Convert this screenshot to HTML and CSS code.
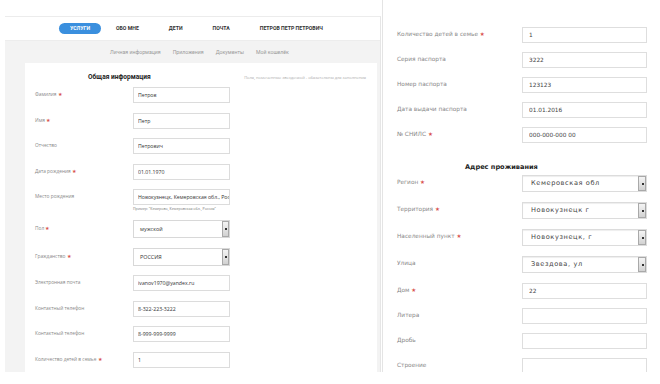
FILE: index.html
```html
<!DOCTYPE html>
<html lang="ru">
<head>
    <meta charset="UTF-8">
    <meta name="viewport" content="width=device-width, initial-scale=1.0">
    <title>Личная информация</title>
    <link rel="stylesheet" href="styles.css">
</head>
<body>

<div class="page">

    <!-- Левая часть: верхнее меню и общая информация -->
    <div class="shot-left">
        <div class="nav">
            <span class="nav-item active">УСЛУГИ</span>
            <span class="nav-item">ОБО МНЕ</span>
            <span class="nav-item">ДЕТИ</span>
            <span class="nav-item">ПОЧТА</span>
            <span class="nav-item">ПЕТРОВ ПЕТР ПЕТРОВИЧ</span>
        </div>

        <div class="subnav">
            <span>Личная информация</span>
            <span>Приложения</span>
            <span>Документы</span>
            <span>Мой кошелёк</span>
        </div>

        <div class="card">
            <div class="card-head">
                <h2>Общая информация</h2>
                <span class="note">Поля, помеченные звездочкой - обязательны для заполнения</span>
            </div>

            <div class="field">
                <label>Фамилия <span class="req">★</span></label>
                <input type="text" value="Петров" readonly>
            </div>
            <div class="field">
                <label>Имя <span class="req">★</span></label>
                <input type="text" value="Петр" readonly>
            </div>
            <div class="field">
                <label>Отчество</label>
                <input type="text" value="Петрович" readonly>
            </div>
            <div class="field">
                <label>Дата рождения <span class="req">★</span></label>
                <input type="text" value="01.01.1970" readonly>
            </div>
            <div class="field with-hint">
                <label>Место рождения</label>
                <input type="text" value="Новокузнецк, Кемеровская обл., Россия" readonly>
            </div>
            <div class="hint">Пример: "Кемерово, Кемеровская обл., Россия"</div>
            <div class="field">
                <label>Пол <span class="req">★</span></label>
                <div class="select">мужской<span class="arrow"></span></div>
            </div>
            <div class="field">
                <label>Гражданство <span class="req">★</span></label>
                <div class="select">РОССИЯ<span class="arrow"></span></div>
            </div>
            <div class="field">
                <label>Электронная почта</label>
                <input type="text" value="ivanov1970@yandex.ru" readonly>
            </div>
            <div class="field">
                <label>Контактный телефон</label>
                <input type="text" value="8-322-223-3222" readonly>
            </div>
            <div class="field">
                <label>Контактный телефон</label>
                <input type="text" value="8-999-999-9999" readonly>
            </div>
            <div class="field">
                <label>Количество детей в семье <span class="req">★</span></label>
                <input type="text" value="1" readonly>
            </div>
        </div>
    </div>

    <!-- Правая часть: паспорт и адрес -->
    <div class="shot-right">
        <div class="field">
            <label>Количество детей в семье <span class="req">★</span></label>
            <input type="text" value="1" readonly>
        </div>
        <div class="field">
            <label>Серия паспорта</label>
            <input type="text" value="3222" readonly>
        </div>
        <div class="field">
            <label>Номер паспорта</label>
            <input type="text" value="123123" readonly>
        </div>
        <div class="field">
            <label>Дата выдачи паспорта</label>
            <input type="text" value="01.01.2016" readonly>
        </div>
        <div class="field">
            <label>№ СНИЛС <span class="req">★</span></label>
            <input type="text" value="000-000-000 00" readonly>
        </div>

        <h3>Адрес проживания</h3>

        <div class="field sel">
            <label>Регион <span class="req">★</span></label>
            <div class="select">Кемеровская обл<span class="arrow"></span></div>
        </div>
        <div class="field sel">
            <label>Территория <span class="req">★</span></label>
            <div class="select">Новокузнецк г<span class="arrow"></span></div>
        </div>
        <div class="field sel">
            <label>Населенный пункт <span class="req">★</span></label>
            <div class="select">Новокузнецк, г<span class="arrow"></span></div>
        </div>
        <div class="field sel">
            <label>Улица</label>
            <div class="select">Звездова, ул<span class="arrow"></span></div>
        </div>
        <div class="field">
            <label>Дом <span class="req">★</span></label>
            <input type="text" value="22" readonly>
        </div>
        <div class="field">
            <label>Литера</label>
            <input type="text" value="" readonly>
        </div>
        <div class="field">
            <label>Дробь</label>
            <input type="text" value="" readonly>
        </div>
        <div class="field">
            <label>Строение</label>
            <input type="text" value="" readonly>
        </div>
    </div>

</div>

</body>
</html>
```

FILE: styles.css
```css
html, body {
    margin: 0;
    padding: 0;
    background: #fff;
}
body {
    width: 660px;
    height: 384px;
    overflow: hidden;
    font-family: "Open Sans", Arial, sans-serif;
    color: #333;
}
.page {
    display: flex;
    align-items: flex-start;
    padding-left: 5px;
}

/* ---- левая часть ---- */
.shot-left {
    width: 376px;
    height: 356px;
    margin-top: 16px;
    border-top: 1px solid #ececec;
    border-right: 1px solid #e6e6e6;
    background: #f3f3f3;
    overflow: hidden;
    box-sizing: border-box;
}
.nav {
    height: 23px;
    background: #fff;
    display: flex;
    align-items: center;
    padding-left: 54px;
    border-bottom: 1px solid #ededed;
}
.nav-item {
    font-family: Roboto, Arial, sans-serif;
    font-size: 5.2px;
    font-weight: bold;
    color: #333;
    padding: 0 15px;
    line-height: 11px;
}
.nav-item.active {
    background: #3a8fde;
    color: #fff;
    border-radius: 6px;
    padding: 0 11px;
    width: 20px;
    text-align: center;
}
.subnav {
    height: 22px;
    display: flex;
    align-items: center;
    gap: 12px;
    padding-left: 105px;
}
.subnav span {
    font-family: Roboto, Arial, sans-serif;
    font-size: 5.2px;
    color: #9a9a9a;
}
.card {
    margin-left: 20px;
    width: 352px;
    height: 330px;
    background: #fff;
    padding: 9px 10px 0;
    box-sizing: border-box;
}
.card-head {
    display: flex;
    justify-content: space-between;
    align-items: center;
    height: 10px;
    margin-bottom: 5px;
    padding-right: 1px;
}
.card-head h2 {
    margin: 0 0 0 53px;
    font-family: Roboto, Arial, sans-serif;
    font-size: 6.6px;
    font-weight: bold;
    color: #222;
}
.note {
    font-size: 4px;
    color: #aaa;
}
.field {
    display: flex;
    align-items: center;
    margin-bottom: 9.5px;
}
.field label {
    width: 98px;
    font-size: 4.8px;
    color: #888;
    margin-top: -2px;
}
.req {
    color: #d9534f;
    font-size: 4.5px;
}
.field input {
    width: 97px;
    height: 16px;
    box-sizing: border-box;
    border: 1px solid #dcdcdc;
    padding: 0 0 0 4px;
    font-family: "Open Sans", Arial, sans-serif;
    font-size: 5.2px;
    color: #333;
    outline: none;
    margin: 0;
    background: #fff;
}
.field.with-hint {
    margin-bottom: 1px;
}
.hint {
    margin-left: 98px;
    font-size: 3.6px;
    color: #777;
    height: 6px;
    line-height: 6px;
    margin-bottom: 8px;
}
.select {
    position: relative;
    width: 97px;
    height: 18px;
    box-sizing: border-box;
    border: 1px solid #d8d8d8;
    padding-left: 6px;
    font-size: 5.4px;
    line-height: 16px;
    color: #333;
}
.arrow {
    position: absolute;
    right: 0;
    top: 0;
    width: 7px;
    height: 16px;
    box-sizing: border-box;
    border: 1px solid #a9a9a9;
    background: linear-gradient(#f4f4f4, #d2d2d2);
}
.arrow::after {
    content: "";
    position: absolute;
    left: 2px;
    top: 6px;
    width: 2px;
    height: 2px;
    background: #333;
}

/* ---- правая часть ---- */
.shot-right {
    width: 277px;
    height: 372px;
    margin-left: 1px;
    border-left: 1px solid #e4e4e4;
    padding: 27px 0 0 14px;
    box-sizing: border-box;
    overflow: hidden;
    font-family: "DejaVu Sans", Verdana, sans-serif;
}
.shot-right .field {
    margin-bottom: 9px;
}
.shot-right .field label {
    width: 125px;
    font-size: 5.8px;
    color: #888;
    margin-top: -3px;
}
.shot-right .req {
    font-size: 5.5px;
}
.shot-right .field input {
    width: 125px;
    height: 16px;
    font-family: "DejaVu Sans", Verdana, sans-serif;
    font-size: 5.8px;
    padding-left: 6px;
    color: #444;
    border-color: #dedede;
}
.shot-right h3 {
    margin: 19px 0 2px 68px;
    font-family: "DejaVu Sans", Verdana, sans-serif;
    font-size: 6.6px;
    font-weight: bold;
    color: #222;
    line-height: 11px;
}
.shot-right .sel {
    margin-bottom: 10px;
}
.shot-right .select {
    width: 125px;
    height: 17px;
    line-height: 15px;
    padding-left: 8px;
    font-size: 6.6px;
    letter-spacing: 0.6px;
    color: #444;
    border-color: #dcdcdc;
    box-shadow: inset 0 1px 1px #eee;
}
.shot-right .arrow {
    height: 15px;
    width: 8px;
}
.shot-right .arrow::after {
    left: 2.5px;
    top: 6px;
}
```
